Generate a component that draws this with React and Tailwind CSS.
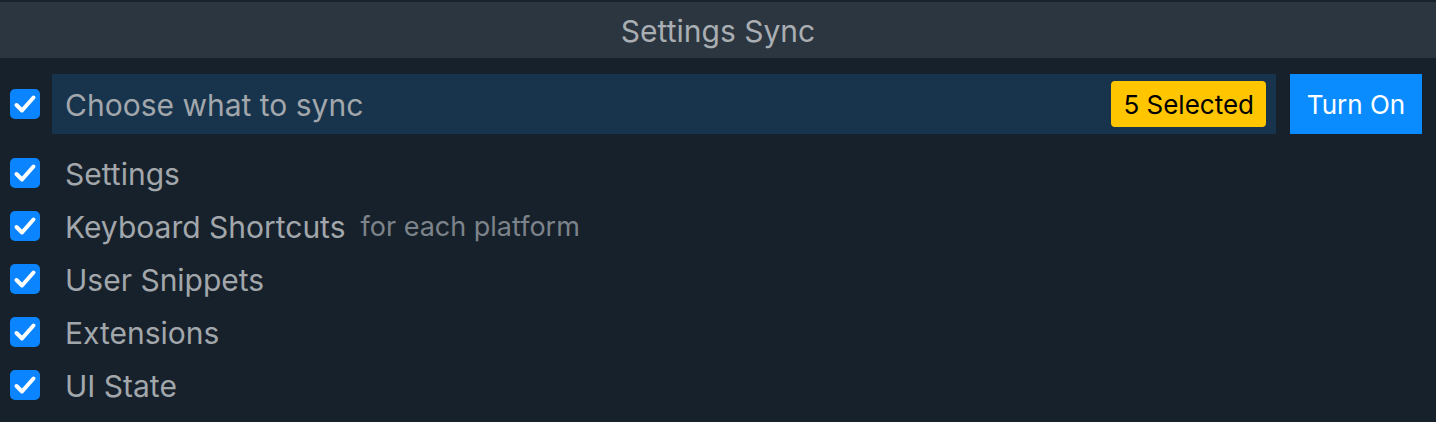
import React from "react";

function Check() {
  return (
    <div className="w-[30px] h-[30px] rounded-[5px] bg-[#0a84ff] shrink-0">
      <svg width="30" height="30" viewBox="0 0 30 30" fill="none">
        <path d="M6.5 16 L12 21.5 L23.5 8.5" stroke="white" strokeWidth="4" strokeLinecap="round" strokeLinejoin="round" />
      </svg>
    </div>
  );
}

const items = [
  { label: "Settings" },
  { label: "Keyboard Shortcuts", note: "for each platform" },
  { label: "User Snippets" },
  { label: "Extensions" },
  { label: "UI State" },
];

export default function App() {
  return (
    <div
      className="w-[1436px] h-[422px] bg-[#17212b] overflow-hidden"
      style={{ fontFamily: "Inter, 'Noto Sans', sans-serif" }}
    >
      <div className="h-[2px] bg-[#1a232c]" />
      <div className="h-[56px] bg-[#2c3640] flex items-center justify-center text-[30px] text-[#a9aeb3] pt-[3px]">
        Settings Sync
      </div>
      <div className="flex items-center mt-[16px] pl-[10px] pr-[14px] h-[60px]">
        <Check />
        <div className="ml-[12px] flex-1 h-[60px] bg-[#18344c] flex items-center pl-[13px] pr-[10px]">
          <span className="flex-1 text-[30px] text-[#a2a7ac] pt-[3px]">Choose what to sync</span>
          <span className="h-[46px] px-[12px] rounded-[4px] bg-[#ffc600] text-black text-[26px] flex items-center">
            5 Selected
          </span>
        </div>
        <button className="ml-[14px] w-[132px] h-[60px] bg-[#0a8cff] text-white text-[26px] flex items-center justify-center">
          Turn On
        </button>
      </div>
      <div className="mt-[12px] pl-[10px] flex flex-col">
        {items.map((it) => (
          <div key={it.label} className="h-[53px] flex items-center">
            <Check />
            <span className="ml-[25px] text-[30px] text-[#a2a7ac] pt-[4px]">{it.label}</span>
            {it.note && (
              <span className="ml-[15px] text-[27px] text-[#7c838a] pt-[4px]">{it.note}</span>
            )}
          </div>
        ))}
      </div>
    </div>
  );
}
